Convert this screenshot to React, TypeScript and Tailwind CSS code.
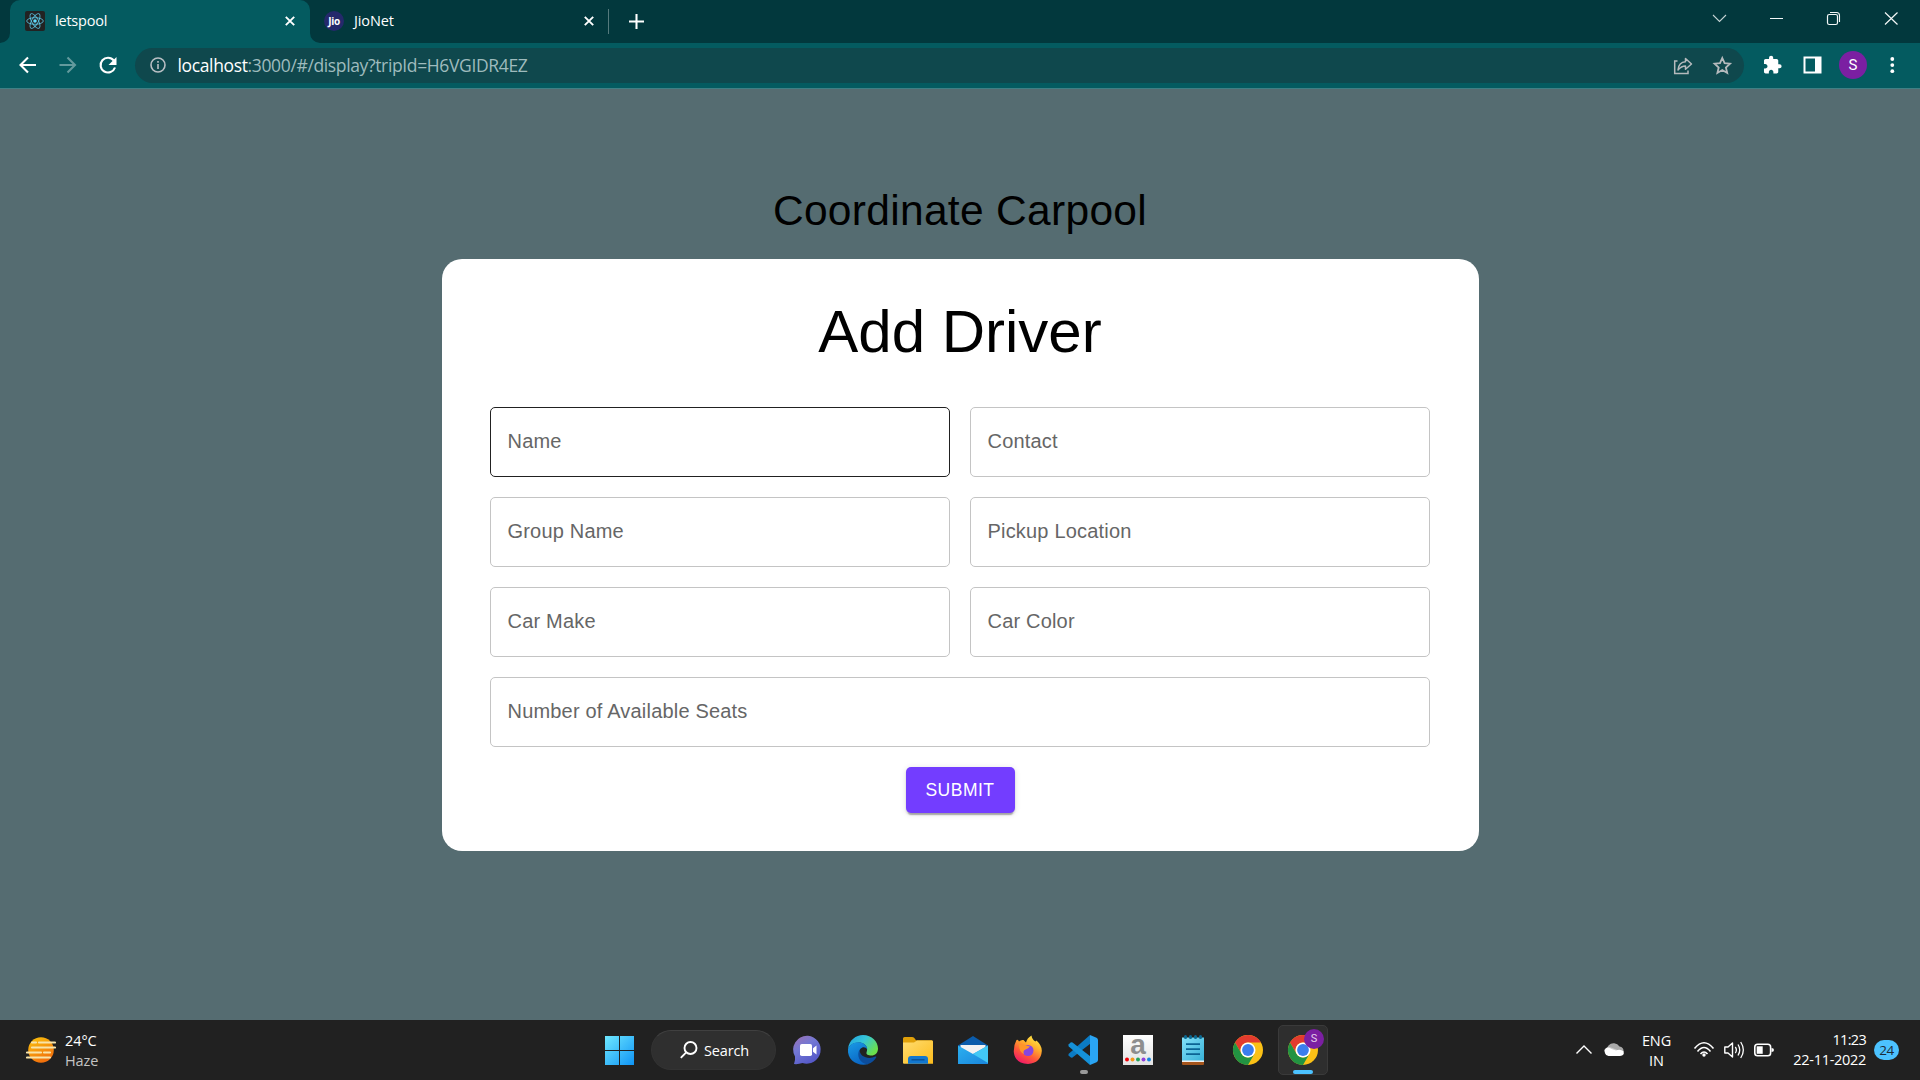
import type { ReactNode } from "react";

type IconProps = { className?: string };

const CloseX = ({ className = "" }: IconProps) => (
  <svg viewBox="0 0 10 10" className={"h-[10px] w-[10px] " + className}>
    <path d="M0.8 0.8 9.2 9.2M9.2 0.8 0.8 9.2" stroke="#fff" strokeWidth="1.9" />
  </svg>
);

const ReactFavicon = () => (
  <svg viewBox="0 0 20 20" className="h-5 w-5 shrink-0">
    <rect width="20" height="20" rx="2" fill="#222" />
    <g fill="none" stroke="#61dafb" strokeOpacity=".8" strokeWidth="0.9">
      <ellipse cx="10" cy="10" rx="8.3" ry="3.3" />
      <ellipse cx="10" cy="10" rx="8.3" ry="3.3" transform="rotate(60 10 10)" />
      <ellipse cx="10" cy="10" rx="8.3" ry="3.3" transform="rotate(120 10 10)" />
    </g>
    <circle cx="10" cy="10" r="1.8" fill="#61dafb" />
  </svg>
);

const TabStrip = () => (
  <div className="flex h-[43px] bg-[#02383d] text-[14.5px] text-white">
    <div className="relative ml-[10px] flex w-[300px] items-center rounded-t-[10px] bg-[#045b60] pb-px pl-[15px]">
      <svg viewBox="0 0 10 10" className="absolute bottom-0 -left-[10px] h-[10px] w-[10px]">
        <path d="M10 0V10H0A10 10 0 0 0 10 0Z" fill="#045b60" />
      </svg>
      <svg viewBox="0 0 10 10" className="absolute -right-[10px] bottom-0 h-[10px] w-[10px]">
        <path d="M0 0V10H10A10 10 0 0 1 0 0Z" fill="#045b60" />
      </svg>
      <ReactFavicon />
      <span className="ml-[10px] flex-1 tracking-[-0.200px]">letspool</span>
      <CloseX className="mr-[15px]" />
    </div>
    <div className="flex w-[298px] items-center pb-px pl-[14px]">
      <span className="flex h-5 w-5 items-center justify-center rounded-full bg-[#24296b] text-[10px] font-bold tracking-[-0.3px]">Jio</span>
      <span className="ml-[10px] flex-1 tracking-[-0.100px]">JioNet</span>
      <CloseX className="mr-[14px]" />
    </div>
    <div className="mt-[9px] h-[25px] w-px bg-[#557a7d]" />
    <svg viewBox="0 0 16 16" className="mt-[14px] ml-[19.500px] h-[15px] w-[15px]">
      <path d="M8 0V16M0 8H16" stroke="#fff" strokeWidth="2.2" />
    </svg>
    <div className="flex-1" />
    <svg viewBox="1700 0 220 43" className="h-[43px] w-[220px]" fill="none" stroke="#f3f7f7">
      <path d="M1713 15 1719.500 21.500 1726 15" strokeWidth="1.100" stroke="#c5d3d4" />
      <path d="M1770 18.500H1783" />
      <rect x="1827.500" y="14.500" width="10" height="10" rx="1.800" strokeWidth="1.200" />
      <path d="M1830 12.500H1836.500A3 3 0 0 1 1839.500 15.500V22" strokeWidth="1.100" />
      <path d="M1885 12.500 1897.500 24.500M1897.500 12.500 1885 24.500" strokeWidth="1.200" />
    </svg>
  </div>
);

const Toolbar = () => (
  <div className="flex h-[46px] items-center border-b border-[#3f8085] bg-[#045b60] pb-px">
    <svg viewBox="0 43 135 45" className="h-[45px] w-[135px] shrink-0" fill="none" strokeWidth="2.100">
      <path d="M36 65H21M28 57.500 20.500 65 28 72.500" stroke="#fff" />
      <path d="M59.500 65H74.500M67.500 57.500 75 65 67.500 72.500" stroke="#639a9d" />
      <path d="M113.800 60.500A7.400 7.400 0 1 0 115 67.500" stroke="#fff" />
      <path d="M116.500 57V65H108.500Z" fill="#fff" />
    </svg>
    <div className="flex h-[35px] w-[1609px] items-center rounded-full bg-[#0f484d] pl-[14.500px]">
      <svg viewBox="0 0 16 16" className="h-4 w-4" fill="none" stroke="#b9bfc4" strokeWidth="1.600">
        <circle cx="8" cy="8" r="7" />
        <path d="M8 7V12M8 4V5.700" />
      </svg>
      <div className="ml-[12px] flex-1 text-[17.500px] tracking-[-0.360px] whitespace-nowrap text-[#9ebbbd]">
        <span className="text-white">localhost</span>:3000/#/display?tripId=H6VGIDR4EZ
      </div>
      <svg viewBox="1672 48 72 35" className="h-[35px] w-[72px]" fill="none" stroke="#b5babd" strokeWidth="1.500">
        <path d="M1677.500 61H1674.700V73.500H1688V70.500" />
        <path d="M1678 70C1678.500 65 1681 62 1685.500 61.800V58.500L1691.500 64 1685.500 69.200V66C1682.500 66 1680.500 67 1678 70Z" strokeLinejoin="round" />
        <path d="M1722.300 58 1724.600 63.200 1730 63.700 1725.900 67.500 1727.200 73 1722.300 70.100 1717.400 73 1718.700 67.500 1714.600 63.700 1720 63.200Z" strokeWidth="1.800" />
      </svg>
    </div>
    <svg viewBox="1744 43 176 45" className="h-[45px] w-[176px] shrink-0">
      <path
        transform="translate(1762.300 54.900) scale(.84)"
        fill="#fff"
        d="M20.500 11H19V7c0-1.100-.9-2-2-2h-4V3.500a2.500 2.500 0 0 0-5 0V5H4c-1.100 0-1.990.9-1.990 2v3.800H3.500c1.490 0 2.700 1.210 2.700 2.700s-1.210 2.700-2.700 2.700H2V20c0 1.100.9 2 2 2h3.800v-1.500c0-1.490 1.210-2.700 2.700-2.700s2.700 1.210 2.700 2.700V22H17c1.100 0 2-.9 2-2v-4h1.500a2.500 2.500 0 0 0 0-5z"
      />
      <path d="M1804.500 57.500H1820.500V72.500H1804.500Z" fill="none" stroke="#fff" strokeWidth="2" />
      <path d="M1815 57H1821V73H1815Z" fill="#fff" />
      <circle cx="1853" cy="65" r="14" fill="#7b1fa2" />
      <text x="1853" y="70.300" textAnchor="middle" fontSize="15" fontFamily="Roboto" fill="#fff">S</text>
      <g fill="#fff">
        <circle cx="1892.300" cy="59" r="1.900" />
        <circle cx="1892.300" cy="65.100" r="1.900" />
        <circle cx="1892.300" cy="71.200" r="1.900" />
      </g>
    </svg>
  </div>
);

const fields = ["Name", "Contact", "Group Name", "Pickup Location", "Car Make", "Car Color", "Number of Available Seats"];

const Page = () => (
  <main className="flex flex-1 flex-col items-center bg-[#556c71] pt-24 font-['Liberation_Sans',Arial,sans-serif] text-black">
    <h1 className="h-[74px] text-[42.500px] leading-[52px] tracking-[0.312px]">Coordinate Carpool</h1>
    <section className="flex h-[592px] w-[1037px] flex-col items-center rounded-[20px] bg-white px-12 pt-[36px]">
      <h2 className="h-[112px] text-[60px] leading-[74px]">Add Driver</h2>
      <div className="grid w-[940px] grid-cols-2 gap-5">
        {fields.map((label, i) => (
          <div
            key={label}
            className={
              "flex h-[70px] items-center rounded-[5px] border pb-[3px] pl-[16.500px] text-[20px] tracking-[0.188px] text-[#666] " +
              (i === 0 ? "border-[#212121] " : "border-[#c4c4c4] ") +
              (i === 6 ? "col-span-2" : "")
            }
          >
            {label}
          </div>
        ))}
      </div>
      <button className="mt-5 h-[46px] w-[109px] rounded-[5px] bg-[#733dff] text-[17.500px] tracking-[0.500px] text-white shadow-[0_4px_1px_-2px_rgba(0,0,0,0.2),0_2px_2px_rgba(0,0,0,0.14),0_1px_6px_rgba(0,0,0,0.12)]">
        SUBMIT
      </button>
    </section>
  </main>
);

const Cell = ({ children }: { children: ReactNode }) => (
  <div className="flex h-[60px] w-[55px] items-center justify-center">{children}</div>
);

const Ico = ({ children }: { children: ReactNode }) => (
  <svg viewBox="0 0 30 30" className="h-[30px] w-[30px] shrink-0 overflow-visible">{children}</svg>
);

const ChromeLogo = () => (
  <Ico>
    <circle cx="15" cy="15" r="15" fill="#fbc116" />
    <path d="M2 7.500A15 15 0 0 1 28 7.500H15A7.500 7.500 0 0 0 8.500 18.750Z" fill="#e33b2e" />
    <path d="M2 7.500A15 15 0 0 0 15 30L21.500 18.750A7.500 7.500 0 0 1 8.500 18.750Z" fill="#229342" />
    <circle cx="15" cy="15" r="7.500" fill="#fff" />
    <circle cx="15" cy="15" r="5.900" fill="#3b7ded" />
  </Ico>
);

const Gradients = () => (
  <svg className="absolute h-0 w-0">
    <defs>
      <linearGradient id="win" x1="0" y1="0" x2="1" y2="1">
        <stop offset="0" stopColor="#6fe8ff" />
        <stop offset="1" stopColor="#0f94f5" />
      </linearGradient>
      <linearGradient id="chat" x1="0" y1="0" x2="0.600" y2="1">
        <stop offset="0" stopColor="#a070b0" />
        <stop offset="0.450" stopColor="#7378d4" />
        <stop offset="1" stopColor="#5558c8" />
      </linearGradient>
      <linearGradient id="edgeTop" x1="0" y1="0" x2="1" y2="0.600">
        <stop offset="0" stopColor="#1e9fe0" />
        <stop offset="0.500" stopColor="#36c5d8" />
        <stop offset="1" stopColor="#6be04c" />
      </linearGradient>
      <linearGradient id="edgeLeft" x1="0" y1="0" x2="0.500" y2="1">
        <stop offset="0" stopColor="#1a9be6" />
        <stop offset="1" stopColor="#0a66c4" />
      </linearGradient>
      <linearGradient id="folder" x1="0" y1="0" x2="1" y2="1">
        <stop offset="0" stopColor="#ffdc70" />
        <stop offset="1" stopColor="#fcbc1c" />
      </linearGradient>
      <linearGradient id="mail" x1="0" y1="0" x2="1" y2="1">
        <stop offset="0" stopColor="#2bb0f0" />
        <stop offset="1" stopColor="#1a86dc" />
      </linearGradient>
      <linearGradient id="fox" x1="0.800" y1="0" x2="0.250" y2="1">
        <stop offset="0" stopColor="#fff04a" />
        <stop offset="0.350" stopColor="#ffb02c" />
        <stop offset="0.650" stopColor="#ff5a38" />
        <stop offset="1" stopColor="#f0146c" />
      </linearGradient>
      <linearGradient id="sun" x1="0" y1="0" x2="0.500" y2="1">
        <stop offset="0" stopColor="#fbc50c" />
        <stop offset="1" stopColor="#f2700c" />
      </linearGradient>
      <linearGradient id="note" x1="0" y1="0" x2="1" y2="1">
        <stop offset="0" stopColor="#83e0f8" />
        <stop offset="1" stopColor="#38b2d8" />
      </linearGradient>
      <linearGradient id="amz" x1="0" y1="0" x2="0" y2="1">
        <stop offset="0" stopColor="#fff" />
        <stop offset="1" stopColor="#e2e2e2" />
      </linearGradient>
    </defs>
  </svg>
);

const Apps = () => (
  <>
    <Cell>
      <Ico>
        <path d="M15 .7A14 14 0 1 1 9.500 28Q5 29.500 1 29Q2.500 25 2 21.500A14 14 0 0 1 15 .7Z" fill="url(#chat)" />
        <rect x="7" y="9" width="12" height="12" rx="1.800" fill="#fff" />
        <path d="M20 13.200 23.500 10.500V19.500L20 16.800Z" fill="#fff" />
      </Ico>
    </Cell>
    <Cell>
      <Ico>
        <path d="M0 14C1 5 8 0 15 0 24 0 30 6.500 30 13.500 30 18 27 20.500 23.500 20.500 20 20.500 18 19.500 18.500 17.500 20.500 13 17.500 8 12 7.500 6 7 1.500 10 0 14Z" fill="url(#edgeTop)" />
        <path d="M0 14C1.500 9.500 6 7 11 7.300 16 7.700 19.500 11 19.300 14.500 17 10.500 11 12 11 18.500 11 24 15 28 20.500 29 10 32-1 25.500 0 14Z" fill="url(#edgeLeft)" />
        <path d="M11.500 14.500C8.500 20 11 28 19.500 29.300 24 28 27 25 28.300 22.300 28.600 21.500 28 21.200 27.300 21.600 20 25 11.500 21.500 11.500 14.500Z" fill="#0c4d9c" />
      </Ico>
    </Cell>
    <Cell>
      <Ico>
        <path d="M0 3.500Q0 2 1.500 2H9Q10.500 2 11.300 3L13 5.300H28.500Q30 5.300 30 7V12H0Z" fill="#e0a009" />
        <path d="M0 7.500H11L14 5.500H29Q30 5.500 30 7V28.800H1Q0 28.800 0 27.800Z" fill="url(#folder)" />
        <path d="M5 28.800V24Q5 21 8 21H22Q25 21 25 24V28.800Z" fill="#1277cf" />
        <path d="M8.500 24.800H21.500" stroke="#0a4d91" strokeWidth="1.300" />
      </Ico>
    </Cell>
    <Cell>
      <Ico>
        <path d="M0 10.500 15 1 30 10.500V16H0Z" fill="#0b5cab" />
        <path d="M2.500 10H27.500V16L15 22 2.500 16Z" fill="#f2f2f2" />
        <path d="M0 10.500 15 19 30 10.500V29H0Z" fill="url(#mail)" />
        <path d="M15 19 30 10.500V28Z" fill="#42c8f5" />
      </Ico>
    </Cell>
    <Cell>
      <Ico>
        <path d="M3.500 5Q5 4 6 6.500 8 4.500 10.500 5L13 7.500Q14 3 18.500 .5 19 4.500 22.500 6.500L23.500 5.500Q29 10.500 28.800 16 28 28 15 29 2 28.500 .8 17 .6 10 3.500 5Z" fill="url(#fox)" />
        <circle cx="15" cy="15.500" r="5.500" fill="#8746e0" />
        <path d="M6 9.500Q10 8.500 13 10.500L17 11.500Q15.500 13.500 12.500 14.500 9.500 15.800 11 19 6 17 6 9.500Z" fill="#ff9628" />
      </Ico>
    </Cell>
    <div className="relative">
      <Cell>
        <Ico>
          <path d="M22 0 22.500 8.500 4.500 22.500Q3.500 23 2.500 22.300L.6 20.600Q0 19.600.8 18.700Z" fill="#0b7bc4" />
          <path d="M.8 9.300 2.600 7.600Q3.500 7 4.500 7.600L22.500 21.500 22 30 .8 11.400Q0 10.300.8 9.300Z" fill="#1591d8" />
          <path d="M22 0 28.500 2.700Q30 3.500 30 5V25Q30 26.500 28.500 27.300L22 30Z" fill="#2aa5f4" />
        </Ico>
      </Cell>
      <div className="absolute bottom-[6px] left-[24px] h-1 w-2 rounded-full bg-[#9a9a9a]" />
    </div>
    <Cell>
      <Ico>
        <path d="M0 0H30V30H0Z" fill="url(#amz)" />
        <text x="15" y="18.500" textAnchor="middle" fontSize="28" fontWeight="700" fontFamily="Liberation Sans" fill="#8e8e8e">a</text>
        <circle cx="4" cy="24.500" r="2" fill="#f00008" />
        <circle cx="9.500" cy="24.500" r="2" fill="#f59a1c" />
        <circle cx="15" cy="24.500" r="2" fill="#25a35c" />
        <circle cx="20.500" cy="24.500" r="2" fill="#9040dc" />
        <circle cx="26" cy="24.500" r="2" fill="#1684e0" />
      </Ico>
    </Cell>
    <Cell>
      <Ico>
        <path d="M4 25H26V29Q26 30 25 30H5Q4 30 4 29Z" fill="#a5551c" />
        <path d="M4 24H26V27H4Z" fill="#f0f0f0" />
        <path d="M4 2.500H26V25.500H4Z" fill="url(#note)" />
        <path d="M8 9.200H22M8 14.200H22M8 19.200H22" stroke="#0b6494" strokeWidth="1.800" />
        <g fill="#0b6a94">
          <rect x="6" y="0" width="3" height="4" rx="1.500" />
          <rect x="11" y="0" width="3" height="4" rx="1.500" />
          <rect x="16" y="0" width="3" height="4" rx="1.500" />
          <rect x="21" y="0" width="3" height="4" rx="1.500" />
        </g>
      </Ico>
    </Cell>
    <Cell><ChromeLogo /></Cell>
    <div className="relative ml-[2.500px] flex h-[50px] w-[50px] items-center justify-center rounded-[5px] border border-[#3a3a3a] bg-[#2e2e2e]">
      <ChromeLogo />
      <span className="absolute top-[3px] right-[3px] flex h-5 w-5 items-center justify-center rounded-full bg-[#7b1fa2] font-['Roboto',sans-serif] text-[11px] text-[#e3cdea]">S</span>
      <div className="absolute bottom-0 left-[14px] h-1 w-5 rounded-full bg-[#4cc2ff]" />
    </div>
  </>
);

const Taskbar = () => (
  <footer className="flex h-[60px] items-center bg-[#212121] text-[14.500px] leading-5 text-white">
    <div className="flex w-[605px] items-center pl-[26px]">
      <svg viewBox="0 0 30 26" className="h-[26px] w-[30px]">
        <circle cx="15" cy="13" r="12.800" fill="url(#sun)" />
        <g strokeWidth="2.200" strokeLinecap="round" stroke="#f8e3a8">
          <path d="M6 5.500H10M13 5.500H29M6 10.500H29M1 15.500H15M18 15.500H24M1 20.500H24" />
        </g>
      </svg>
      <div className="ml-[9px] pt-px text-[14.500px] tracking-[-0.100px]">
        <div>24°C</div>
        <div className="text-[#c4c4c4]">Haze</div>
      </div>
    </div>
    <svg viewBox="0 0 29 29" className="h-[29px] w-[29px]" fill="url(#win)">
      <path d="M0 0H14V14H0ZM15 0H29V14H15ZM0 15H14V29H0ZM15 15H29V29H15Z" />
    </svg>
    <div className="ml-[17px] flex h-10 w-[125px] items-center rounded-full border border-[#333] border-t-[#404040] bg-[#2f2f2f] pl-[28px]">
      <svg viewBox="0 0 18 18" className="h-[18px] w-[18px]" fill="none" stroke="#fff" strokeWidth="1.900">
        <circle cx="10.500" cy="7" r="6" />
        <path d="M6.200 11.300.8 16.800" />
      </svg>
      <span className="ml-[6px] pt-px tracking-[-0.150px]">Search</span>
    </div>
    <div className="ml-[4.500px] flex items-center"><Apps /></div>
    <div className="flex-1" />
    <svg viewBox="1570 1020 60 60" className="h-[60px] w-[60px]">
      <path d="M1576.500 1053.500 1584 1046 1591.500 1053.500" fill="none" stroke="#fff" strokeWidth="1.400" />
      <path d="M1607 1050A5 5 0 0 1 1608.500 1045.500A7 7 0 0 1 1619.500 1046.500 4.500 4.500 0 0 1 1623.500 1052Z" fill="#a9a9a9" />
      <path d="M1604 1051.500A5 5 0 0 1 1611 1047.500L1620 1051Z" fill="#cfcfcf" />
      <path d="M1608.500 1056A4.500 4.500 0 0 1 1606 1048.300Q1608.500 1047 1611.500 1049L1616 1050.500Q1620 1048.500 1623.500 1051.200 1625 1055.500 1620 1056Z" fill="#fff" />
    </svg>
    <div className="ml-[6.500px] w-10 pt-px text-center tracking-[-0.100px]">
      <div>ENG</div>
      <div>IN</div>
    </div>
    <svg viewBox="1690 1020 90 60" className="ml-[13.500px] h-[60px] w-[90px]" fill="none" stroke="#fff" strokeWidth="1.600">
      <path d="M1694.500 1048.500Q1704 1037 1713.500 1048.500M1697.500 1051.500Q1704 1043.500 1710.500 1051.500M1700.500 1054Q1704 1050 1707.500 1054" />
      <circle cx="1704" cy="1055" r="1.700" fill="#fff" stroke="none" />
      <path d="M1724.800 1047H1728L1732.500 1043V1057L1728 1053H1724.800Z" strokeWidth="1.400" strokeLinejoin="round" />
      <path d="M1735.300 1047Q1737.500 1050 1735.300 1053M1738 1044.500Q1741.500 1050 1738 1055.500M1740.700 1042Q1746 1050 1740.700 1058" strokeWidth="1.300" />
      <rect x="1754.800" y="1044.300" width="15.800" height="11.500" rx="2.800" />
      <rect x="1756.700" y="1046.300" width="6" height="7.500" fill="#fff" stroke="none" />
      <path d="M1771.500 1048V1052Q1774 1052 1774 1050T1771.500 1048Z" fill="#fff" stroke="none" />
    </svg>
    <div className="w-[86px] text-right whitespace-nowrap">
      <div className="tracking-[-0.700px]">11:23</div>
      <div className="tracking-[-0.300px]">22-11-2022</div>
    </div>
    <div className="mr-[21px] ml-2 flex h-5 w-[25px] items-center justify-center rounded-full bg-[#4cc2ff] text-[13.500px] tracking-[-0.400px] text-[#1b2b38]">24</div>
  </footer>
);

export default function App() {
  return (
    <div className="relative flex h-[1080px] w-[1920px] flex-col overflow-hidden font-['Open_Sans','Noto_Sans',sans-serif]">
      <Gradients />
      <TabStrip />
      <Toolbar />
      <Page />
      <Taskbar />
    </div>
  );
}
